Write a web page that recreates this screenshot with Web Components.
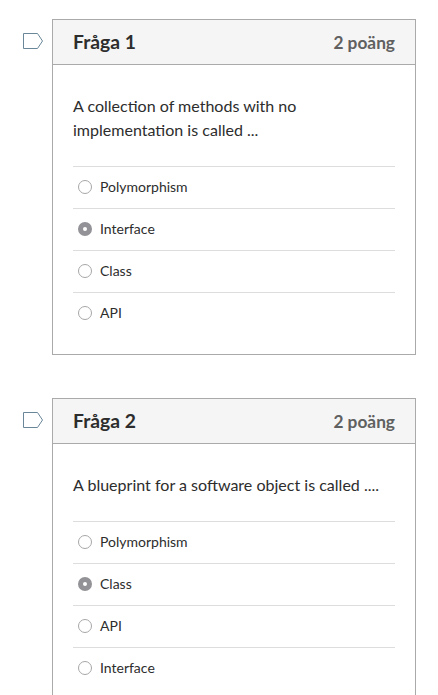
<!DOCTYPE html>
<html lang="sv"><head><meta charset="utf-8"><title>Quiz</title>
<style>html,body{margin:0;background:#fff}body{height:695px;overflow:hidden;font-family:Lato,"Liberation Sans",sans-serif;color:#2d2d2d}</style></head><body>
<quiz-page></quiz-page>
<script>
class QuizOption extends HTMLElement{
 connectedCallback(){
  const on=this.hasAttribute('selected');
  this.attachShadow({mode:'open'}).innerHTML=`<style>
:host{display:flex;align-items:center;height:40px;border-top:1px solid #ddd;padding:0 0 1px 5px;gap:8px;font-size:14px;line-height:20px}
svg{display:block;width:14px;height:14px;flex:none}</style>
<svg viewBox="0 0 14 14">${on?'<circle cx="7" cy="7" r="7" fill="#929297"/><circle cx="7" cy="7" r="2" fill="#fff"/>':'<circle cx="7" cy="7" r="6.5" fill="#fff" stroke="#a6a6a6"/>'}</svg><span><slot></slot></span>`;
 }}
customElements.define('quiz-option',QuizOption);
class QuizQuestion extends HTMLElement{
 connectedCallback(){
  this.attachShadow({mode:'open'}).innerHTML=`<style>
:host{display:flex;align-items:flex-start;flex:none}
.flag{display:block;width:20px;height:16px;margin:14px 9px 0 23px;flex:none}
.card{box-sizing:border-box;width:364px;height:336px;border:1px solid #aaa;background:#fff}
header{display:flex;box-sizing:border-box;height:45px;align-items:center;justify-content:space-between;padding:0 20px;background:#f5f5f5;border-bottom:1px solid #aaa}
.name{font-size:19.3px;line-height:24px;font-weight:700}
.points{font-size:17.3px;line-height:22px;font-weight:700;color:#606060;padding-top:2px}
.text{padding:29px 20px 24px;font-size:16.05px;line-height:24px}
.answers{padding:0 20px}</style>
<svg class="flag" viewBox="0 0 20 16"><path d="M.5.5H14.5L19.5 8 14.5 15.5H.5Z" fill="#fff" stroke="#6a8799"/></svg>
<section class="card"><header><span class="name">${this.getAttribute('name')}</span><span class="points">${this.getAttribute('points')}</span></header>
<div class="text"><slot name="text"></slot></div><div class="answers"><slot></slot></div></section>`;
 }}
customElements.define('quiz-question',QuizQuestion);
class QuizPage extends HTMLElement{
 connectedCallback(){
  this.attachShadow({mode:'open'}).innerHTML=`<style>:host{display:flex;flex-direction:column;gap:43px;padding-top:19px;box-sizing:border-box;height:695px;overflow:hidden}</style>
<quiz-question name="Fråga 1" points="2 poäng"><span slot="text">A collection of methods with no implementation is called ...</span><quiz-option>Polymorphism</quiz-option><quiz-option selected>Interface</quiz-option><quiz-option>Class</quiz-option><quiz-option>API</quiz-option></quiz-question>
<quiz-question name="Fråga 2" points="2 poäng"><span slot="text">A blueprint for a software object is called ....</span><quiz-option>Polymorphism</quiz-option><quiz-option selected>Class</quiz-option><quiz-option>API</quiz-option><quiz-option>Interface</quiz-option></quiz-question>`;
 }}
customElements.define('quiz-page',QuizPage);
</script></body></html>
